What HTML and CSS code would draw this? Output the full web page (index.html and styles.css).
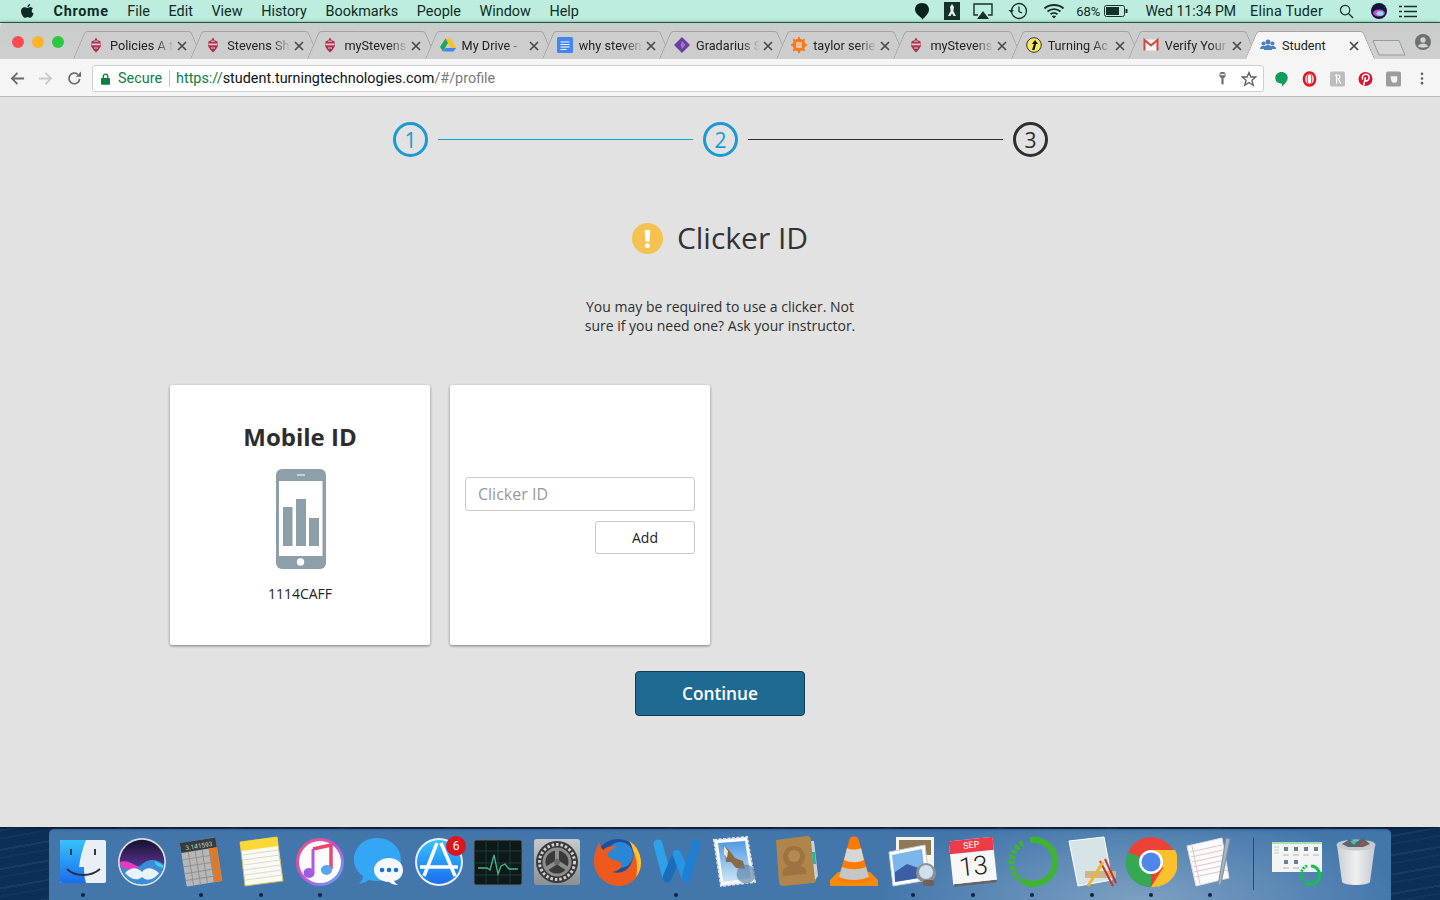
FILE: index.html
```html
<!DOCTYPE html>
<html lang="en">
<head>
<meta charset="utf-8">
<title>Student</title>
<link rel="stylesheet" href="styles.css">
</head>
<body>
<svg class="defs" width="0" height="0" aria-hidden="true">
  <defs>
    <symbol id="stevens" viewBox="0 0 16 16">
      <path d="M8 0.500 9.500 3 12.500 4.500 13 9 10.500 13 8 15.500 5.500 13 3 9 3.500 4.500 6.500 3Z" fill="#a8324f"/>
      <path d="M3.500 6.500H12.500V8.300H3.500Z" fill="#e9c3cc"/>
      <path d="M6 3.500H10V5H6Z" fill="#d98a9c"/>
      <path d="M6 10.500H10V11.500H6Z" fill="#e8c6ce"/>
    </symbol>
    <symbol id="close" viewBox="0 0 10 10">
      <path d="M1 1 9 9M9 1 1 9" stroke="#4a4a4a" stroke-width="1.700" fill="none"/>
    </symbol>
    <linearGradient id="siriG" x1="0" y1="0" x2="0" y2="1">
      <stop offset="0" stop-color="#12122e"/><stop offset=".45" stop-color="#4a2a78"/><stop offset="1" stop-color="#2b6fb8"/>
    </linearGradient>
    <linearGradient id="itunesG" x1="0" y1="0" x2="1" y2="1">
      <stop offset="0" stop-color="#f9506b"/><stop offset=".5" stop-color="#c950dd"/><stop offset="1" stop-color="#4fb6f0"/>
    </linearGradient>
    <linearGradient id="blueG" x1="0" y1="0" x2="0" y2="1">
      <stop offset="0" stop-color="#35c2fb"/><stop offset="1" stop-color="#1b6df0"/>
    </linearGradient>
    <linearGradient id="boxG" x1="0" y1="0" x2="0" y2="1">
      <stop offset="0" stop-color="#c6cacb"/><stop offset="1" stop-color="#8b9193"/>
    </linearGradient>
    <linearGradient id="skyG" x1="0" y1="0" x2="0" y2="1">
      <stop offset="0" stop-color="#4d9be4"/><stop offset="1" stop-color="#cfe5f5"/>
    </linearGradient>
    <linearGradient id="glassG" x1="0" y1="0" x2="1" y2="0">
      <stop offset="0" stop-color="#c9cfd3"/><stop offset=".5" stop-color="#eef0f1"/><stop offset="1" stop-color="#c4cace"/>
    </linearGradient>
    <clipPath id="siriClip"><circle cx="26" cy="26" r="22.300"/></clipPath>
  </defs>
</svg>

<header class="menubar">
  <div class="menu-left">
    <svg class="apple" viewBox="0 0 14 16"><path d="M10.200 1C10.300 2.500 9 4 7.400 3.900 7.300 2.500 8.700 1.100 10.200 1ZM7.400 4.900C8.100 4.900 9 4.100 10.300 4.100 11.400 4.200 12.400 4.700 13 5.600 11 6.900 11.400 9.700 13.600 10.600 13.100 12 11.700 14.800 10.200 14.800 9.300 14.800 8.800 14.200 7.700 14.200 6.600 14.200 6 14.800 5.200 14.800 3.400 14.800 1 11 1 8.200 1 5.500 2.800 4.200 4.400 4.200 5.600 4.200 6.600 4.900 7.400 4.900Z" fill="#0d2a24"/></svg>
    <span class="menu-strong">Chrome</span>
    <span>File</span><span>Edit</span><span>View</span><span>History</span><span>Bookmarks</span><span>People</span><span>Window</span><span>Help</span>
  </div>
  <div class="menu-right">
    <svg class="st st-bubble" viewBox="0 0 16 18"><path d="M8 1C12 1 15 3.800 15 7.500 15 11.500 11 15 8.300 17.500 7.800 15 1 12.500 1 7.500 1 3.800 4 1 8 1Z" fill="#08231d"/></svg>
    <svg class="st st-tower" viewBox="0 0 16 18"><rect width="16" height="18" fill="#15312b"/><path d="M8 2 10 5 9.300 9 12 14H9.500L8 11.500 6.500 14H4L6.700 9 6 5Z" fill="#dff3ec"/></svg>
    <svg class="st st-air" viewBox="0 0 20 17"><path d="M5 12H1V1H19V12H15" fill="none" stroke="#15312b" stroke-width="1.400"/><path d="M10 8 16 16H4Z" fill="#15312b"/></svg>
    <svg class="st st-time" viewBox="0 0 20 18"><circle cx="11" cy="9" r="7.500" fill="none" stroke="#15312b" stroke-width="1.300"/><path d="M11 4.500V9.500L14 11" fill="none" stroke="#15312b" stroke-width="1.300"/><path d="M0.500 8H6L3.200 11Z" fill="#15312b"/></svg>
    <svg class="st st-wifi" viewBox="0 0 22 16"><path d="M1.500 5.500C6.500 .8 15.500 .8 20.500 5.500M4.500 8.500C8 5.300 14 5.300 17.500 8.500M7.500 11.300C9.500 9.700 12.500 9.700 14.500 11.300" fill="none" stroke="#15312b" stroke-width="1.800"/><path d="M11 15.500 8.800 13.200C10 12.300 12 12.300 13.200 13.200Z" fill="#15312b"/></svg>
    <span class="st-pct">68%</span>
    <svg class="st st-batt" viewBox="0 0 24 12"><rect x=".5" y=".5" width="20" height="11" rx="2" fill="none" stroke="#15312b"/><rect x="2" y="2" width="13" height="8" fill="#15312b"/><rect x="21.500" y="4" width="2" height="4" fill="#15312b"/></svg>
    <span class="st-clock">Wed 11:34 PM</span>
    <span class="st-user">Elina Tuder</span>
    <svg class="st st-search" viewBox="0 0 16 16"><circle cx="6.500" cy="6.500" r="5" fill="none" stroke="#15312b" stroke-width="1.300"/><path d="M10 10 15 15" stroke="#15312b" stroke-width="1.500"/></svg>
    <svg class="st st-siri" viewBox="0 0 16 16"><circle cx="8" cy="8" r="8" fill="#12143a"/><ellipse cx="8" cy="10" rx="6" ry="3.500" fill="#c44fd0"/><ellipse cx="9" cy="10.500" rx="3.500" ry="2.200" fill="#8fdcf5"/></svg>
    <svg class="st st-list" viewBox="0 0 18 13"><path d="M5 1.500H18M5 6.500H18M5 11.500H18M0 1.500H3M0 6.500H3M0 11.500H3" stroke="#15312b" stroke-width="1.700"/></svg>
  </div>
</header>

<div class="window">
  <div class="tabstrip">
    <div class="lights"><i class="light red"></i><i class="light yellow"></i><i class="light green"></i></div>
    <div class="tabs">
      <div class="tab"><svg class="fav"><use href="#stevens"/></svg><span class="tab-title">Policies A t</span><svg class="x"><use href="#close"/></svg></div>
      <div class="tab"><svg class="fav"><use href="#stevens"/></svg><span class="tab-title">Stevens Sh</span><svg class="x"><use href="#close"/></svg></div>
      <div class="tab"><svg class="fav"><use href="#stevens"/></svg><span class="tab-title">myStevens</span><svg class="x"><use href="#close"/></svg></div>
      <div class="tab"><svg class="fav" viewBox="0 0 16 16"><path d="M5.500 1.500H10.500L16 11H11Z" fill="#f5c518"/><path d="M5.500 1.500 8 6 3 14.500 0 10Z" fill="#1fa463"/><path d="M5.500 11H16L13.500 14.500H3Z" fill="#4285f4"/></svg><span class="tab-title">My Drive - </span><svg class="x"><use href="#close"/></svg></div>
      <div class="tab"><svg class="fav" viewBox="0 0 16 16"><rect width="16" height="16" rx="1.500" fill="#4285f4"/><path d="M3.500 5H12.500M3.500 7.500H12.500M3.500 10H12.500M3.500 12.500H9.500" stroke="#fff" stroke-width="1.200"/></svg><span class="tab-title">why steven</span><svg class="x"><use href="#close"/></svg></div>
      <div class="tab"><svg class="fav" viewBox="0 0 16 16"><path d="M8 0 16 8 8 16 0 8Z" fill="#6b3fa0"/><path d="M8 4 11.500 8 8 12 6.500 8Z" fill="#9d78cc"/></svg><span class="tab-title">Gradarius S</span><svg class="x"><use href="#close"/></svg></div>
      <div class="tab"><svg class="fav" viewBox="0 0 16 16"><circle cx="8" cy="8" r="6.500" fill="#f47a1f"/><path d="M8 0V16M0 8H16M2.300 2.300 13.700 13.700M13.700 2.300 2.300 13.700" stroke="#f47a1f" stroke-width="2"/><path d="M5 6H11M5 8H11M5 10H11" stroke="#fff" stroke-width="1"/></svg><span class="tab-title">taylor serie</span><svg class="x"><use href="#close"/></svg></div>
      <div class="tab"><svg class="fav"><use href="#stevens"/></svg><span class="tab-title">myStevens</span><svg class="x"><use href="#close"/></svg></div>
      <div class="tab"><svg class="fav" viewBox="0 0 16 16"><circle cx="8" cy="8" r="7.300" fill="#f6ea5c" stroke="#333" stroke-width="1"/><path d="M9 3 12 7H10L8.500 13H6L8 7H6Z" fill="#111"/></svg><span class="tab-title">Turning Ac</span><svg class="x"><use href="#close"/></svg></div>
      <div class="tab"><svg class="fav" viewBox="0 0 16 16"><rect x="1" y="2.500" width="14" height="11" fill="#f4f4f4"/><path d="M1.500 13.500V3L8 8.500 14.500 3V13.500" fill="none" stroke="#d44638" stroke-width="2"/></svg><span class="tab-title">Verify Your</span><svg class="x"><use href="#close"/></svg></div>
      <div class="tab tab-active"><svg class="fav" viewBox="0 0 16 16"><circle cx="3.500" cy="6.500" r="2" fill="#4a7fc1"/><circle cx="12.500" cy="6.500" r="2" fill="#4a7fc1"/><circle cx="8" cy="5" r="2.500" fill="#4a7fc1"/><path d="M0 12C0 9.500 2 9 3.500 9S7 9.500 7 12ZM9 12C9 9.500 11 9 12.500 9S16 9.500 16 12Z" fill="#4a7fc1"/><path d="M4 13C4 9 6 8 8 8S12 9 12 13Z" fill="#4a7fc1"/></svg><span class="tab-title tab-title-full">Student</span><svg class="x"><use href="#close"/></svg></div>
      <svg class="newtab" viewBox="0 0 34 17"><path d="M1 1.500H27L33 16H7Z" fill="#d6d6d6" stroke="#9a9a9a"/></svg>
    </div>
    <svg class="profile" viewBox="0 0 16 16"><circle cx="8" cy="8" r="8" fill="#6f6f6f"/><circle cx="8" cy="6" r="2.700" fill="#d2d2d2"/><path d="M3 12.500C3.800 10 6 9.700 8 9.700S12.200 10 13 12.500C11 14 5 14 3 12.500Z" fill="#d2d2d2"/></svg>
  </div>

  <div class="toolbar">
    <svg class="nav" viewBox="0 0 16 16"><path d="M15 8H2M8 2 2 8 8 14" fill="none" stroke="#6a6a6a" stroke-width="1.900"/></svg>
    <svg class="nav" viewBox="0 0 16 16"><path d="M1 8H14M8 2 14 8 8 14" fill="none" stroke="#c9c9c9" stroke-width="1.900"/></svg>
    <svg class="nav" viewBox="0 0 16 16"><path d="M13.500 8.500A5.700 5.700 0 1 1 11.500 3.500" fill="none" stroke="#6a6a6a" stroke-width="1.800"/><path d="M9.500 6H15V.5Z" fill="#6a6a6a"/></svg>
    <div class="omnibox">
      <svg class="lock" viewBox="0 0 10 13"><path d="M2.500 6V3.500a2.500 2.500 0 0 1 5 0V6" fill="none" stroke="#0b8043" stroke-width="1.500"/><rect y="5.500" width="10" height="7.500" rx="1" fill="#0b8043"/></svg>
      <span class="secure">Secure</span>
      <span class="omni-sep"></span>
      <span class="url"><span class="url-scheme">https://</span><span class="url-host">student.turningtechnologies.com</span><span class="url-path">/#/profile</span></span>
      <span class="omni-spacer"></span>
      <svg class="omni-key" viewBox="0 0 10 14"><circle cx="5" cy="3" r="3.500" fill="#6e6e6e"/><rect x="3.800" y="4" width="2.400" height="9.500" fill="#6e6e6e"/><rect x="2.500" y="1.800" width="5" height="1.600" fill="#eee"/></svg>
      <svg class="omni-star" viewBox="0 0 16 16"><path d="M8 1.500 9.900 6H14.800L10.900 9.200 12.300 14.300 8 11.500 3.700 14.300 5.100 9.200 1.200 6H6.100Z" fill="none" stroke="#5f5f5f" stroke-width="1.300"/></svg>
    </div>
    <div class="ext">
      <svg class="ext-ic" viewBox="0 0 16 18"><path d="M8 1C12 1 15 3.800 15 7.500 15 11.500 11 15 8.500 17.500V14C4 14 1 11.500 1 7.500 1 3.800 4 1 8 1Z" fill="#0f9d58"/></svg>
      <svg class="ext-ic" viewBox="0 0 16 16"><ellipse cx="8" cy="8" rx="6" ry="7" fill="none" stroke="#e5141e" stroke-width="2.600"/><ellipse cx="8" cy="8" rx="2.500" ry="5.500" fill="#fff" stroke="#e5141e"/></svg>
      <svg class="ext-ic" viewBox="0 0 16 16"><rect width="16" height="16" rx="2" fill="#bdbdbd"/><path d="M5 4H9.500C11 4 11 7.500 9 7.500H7M7 3V13M9 8 11.500 13" fill="none" stroke="#fff" stroke-width="1.300"/></svg>
      <svg class="ext-ic" viewBox="0 0 16 16"><circle cx="8" cy="8" r="7.500" fill="#d7172f"/><path d="M6 15 8 6M5 8.500C3.500 5 6 3 8.500 3 11.500 3 12.500 5.500 11.500 8 10.500 10.500 8 10.500 7.300 9" fill="none" stroke="#fff" stroke-width="1.700"/></svg>
      <svg class="ext-ic" viewBox="0 0 16 16"><rect width="16" height="16" rx="2" fill="#9c9c9c"/><path d="M5 5H12V9C12 11.500 10 12.500 7.500 12 5.500 11 5 8 5 5Z" fill="#f3f3f3"/></svg>
      <svg class="ext-menu" viewBox="0 0 4 14"><circle cx="2" cy="2" r="1.400" fill="#5f5f5f"/><circle cx="2" cy="7" r="1.400" fill="#5f5f5f"/><circle cx="2" cy="12" r="1.400" fill="#5f5f5f"/></svg>
    </div>
  </div>

  <main class="page">
    <div class="stepper">
      <span class="step step-done">1</span><span class="step-line step-line-done"></span>
      <span class="step step-done">2</span><span class="step-line"></span>
      <span class="step">3</span>
    </div>
    <div class="title-row">
      <span class="warn">!</span>
      <h1 class="title">Clicker ID</h1>
    </div>
    <p class="lead">You may be required to use a clicker. Not<br>sure if you need one? Ask your instructor.</p>
    <div class="cards">
      <section class="card card-mobile">
        <h2 class="card-title">Mobile ID</h2>
        <svg class="phone" viewBox="0 0 50 100">
          <rect width="50" height="100" rx="6" fill="#8d9fa9"/>
          <rect x="3" y="12" width="43.500" height="75" fill="#fff"/>
          <rect x="21" y="5.500" width="8" height="1" fill="#fff"/>
          <circle cx="24.500" cy="93" r="3.700" fill="#fff"/>
          <rect x="7" y="38" width="9.500" height="39" fill="#8d9fa9"/>
          <rect x="20" y="30" width="10" height="47" fill="#8d9fa9"/>
          <rect x="33" y="49" width="10" height="28" fill="#8d9fa9"/>
        </svg>
        <p class="mobile-id">1114CAFF</p>
      </section>
      <section class="card card-clicker">
        <input class="clicker-input" type="text" placeholder="Clicker ID">
        <button class="add-btn" type="button">Add</button>
      </section>
    </div>
    <button class="continue" type="button">Continue</button>
  </main>
</div>

<footer class="desktop">
  <nav class="dock">
    <div class="dock-item on"><svg viewBox="0 0 52 52"><rect x="3" y="4" width="46" height="43" rx="2" fill="#e9eff5"/><path d="M5 4H29C25 14 23 23 22 31H27C27 37 27.500 42 29 47H5C4 47 3 46 3 45V6C3 5 4 4 5 4Z" fill="url(#blueG)"/><path d="M14 13V19M38 13V19" stroke="#2a3a4a" stroke-width="2"/><path d="M10 33C18 41 34 41 43 33" fill="none" stroke="#24303c" stroke-width="1.800"/></svg></div>
    <div class="dock-item"><svg viewBox="0 0 52 52"><circle cx="26" cy="26" r="24" fill="#d9dde0"/><circle cx="26" cy="26" r="22.300" fill="url(#siriG)"/><g clip-path="url(#siriClip)"><path d="M2 30C12 22 18 32 24 30 30 24 38 20 50 30V50H2Z" fill="#3b8ed6"/><path d="M2 27C10 23 16 27 23 32 14 36 8 34 2 27Z" fill="#e63bc0"/><path d="M38 25C42 26 46 28 49 32 44 32 40 30 38 25Z" fill="#3fd0e8"/><path d="M9 37C15 31 21 31 26 36 30 31 36 31 43 37 37 45 30 45 26 41 22 45 15 44 9 37Z" fill="#e8f3fb"/></g></svg></div>
    <div class="dock-item on"><svg viewBox="0 0 52 52"><g transform="rotate(-9 26 26)"><rect x="8" y="4" width="36" height="44" rx="1" fill="#b7b7b7"/><rect x="8" y="4" width="36" height="10" fill="#333d3e"/><text x="40" y="12" class="calc-read">3.141593</text><rect x="36" y="14" width="8" height="34" fill="#e8771b"/><path d="M8 21H44M8 28H44M8 35H44M8 42H44M15 14V48M22 14V48M29 14V48M36 14V48" stroke="#8f8f8f" stroke-width="1"/></g></svg></div>
    <div class="dock-item on"><svg viewBox="0 0 52 52"><path d="M5 6 42 1 48 45 10 50Z" fill="#fbfaf0" stroke="#cdb866"/><path d="M5 6 42 1 43.300 10 6.300 15Z" fill="#fdd835"/><path d="M7.500 19 44 14M8 24 44.700 19M8.700 29 45.400 24M9.400 34 46 29M10 39 46.800 34M10.700 44 47.400 39" stroke="#d8d8d8" stroke-width="1"/></svg></div>
    <div class="dock-item on"><svg viewBox="0 0 52 52"><circle cx="26" cy="26" r="24" fill="url(#itunesG)"/><circle cx="26" cy="26" r="21" fill="#fcfcfd"/><path d="M19 13 37 9V33" fill="none" stroke="#e9476f" stroke-width="3.500"/><ellipse cx="15" cy="37" rx="5.500" ry="5" fill="#9c5de0"/><path d="M19 13V37" stroke="#b35ae0" stroke-width="3"/><ellipse cx="32.500" cy="34" rx="5.500" ry="5" fill="#5aa6ee"/></svg></div>
    <div class="dock-item"><svg viewBox="0 0 52 52"><path d="M24 2C37 2 48 11 48 24 48 36 37 45 24 45 21 45 18 44.500 16 44 13 46 9 48 6 47.500 9 45 10 42 10 40 4 36 1 30 1 24 1 11 11 2 24 2Z" fill="#33a6f6"/><path d="M36 22C44 22 50 27 50 34 50 40 46 44 41 45 42 47 44 48 45 49 42 49 38 48 36 46 28 46 21 41 21 34 21 27 28 22 36 22Z" fill="#f4f8fb"/><circle cx="29" cy="34" r="2.300" fill="#1c6fd6"/><circle cx="36" cy="34" r="2.300" fill="#1c6fd6"/><circle cx="43" cy="34" r="2.300" fill="#1c6fd6"/></svg></div>
    <div class="dock-item"><svg viewBox="0 0 52 52"><circle cx="26" cy="26" r="24" fill="#e9eef5"/><circle cx="26" cy="26" r="22" fill="url(#blueG)"/><path d="M28 7 42 40M24 7 11 40M7 31H45" stroke="#fff" stroke-width="3.500" fill="none"/></svg><span class="badge">6</span></div>
    <div class="dock-item"><svg viewBox="0 0 52 52"><rect x="2" y="4" width="48" height="45" rx="2" fill="#0e1a1a" stroke="#646d6d"/><path d="M2 15H50M2 27H50M2 39H50M14 4V49M26 4V49M38 4V49" stroke="#1f3b38" stroke-width="1"/><path d="M6 32H15L18 34 22 19 26 38 29 30 33 28 37 33H46" fill="none" stroke="#49b58a" stroke-width="1.300"/></svg></div>
    <div class="dock-item"><svg viewBox="0 0 52 52"><rect x="3" y="3" width="46" height="46" rx="3" fill="url(#boxG)"/><circle cx="26" cy="26" r="21" fill="#3a3a3a"/><circle cx="26" cy="26" r="17.500" fill="none" stroke="#d0d0d0" stroke-width="3" stroke-dasharray="2.500 2"/><circle cx="26" cy="26" r="13" fill="none" stroke="#8d8d8d" stroke-width="3"/><path d="M26 26V13M26 26 15 33M26 26 37 33" stroke="#8d8d8d" stroke-width="4"/><circle cx="26" cy="26" r="3" fill="#6a6a6a"/></svg></div>
    <div class="dock-item"><svg viewBox="0 0 52 52"><circle cx="27" cy="26" r="23" fill="#1d4f9c"/><circle cx="29" cy="19" r="13" fill="#2a86d6"/><path d="M8 6C6 12 2 20 3 28 5 42 17 50 28 50 40 50 50 40 50 27 50 17 45 9 38 5 43 12 44 20 40 28 36 36 28 38 21 36 28 35 32 31 30 27 27 24 19 24 17 20 16 16 21 13 26 11 20 9 15 11 12 14 10 12 9 9 8 6Z" fill="#ee5a1e"/><path d="M38 5C45 9 50 17 50 27 50 32 48 37 45 41 47 32 46 22 42 14 41 10 40 7 38 5Z" fill="#ffc531"/></svg></div>
    <div class="dock-item on"><svg viewBox="0 0 52 52"><path d="M8 8 17 42" stroke="#2fa0ea" stroke-width="9" stroke-linecap="round"/><path d="M17 42 27 18" stroke="#1a6dbb" stroke-width="9" stroke-linecap="round"/><path d="M27 18 36 42" stroke="#2796e2" stroke-width="9" stroke-linecap="round"/><path d="M36 42 46 8" stroke="#1f7fd2" stroke-width="9" stroke-linecap="round"/></svg></div>
    <div class="dock-item"><svg viewBox="0 0 52 52"><path d="M5 4 38 1 46 46 12 50Z" fill="#fff" stroke="#dfe5ea" stroke-width="2" stroke-dasharray="3 1.500"/><path d="M9 7 36 5 42 42 14 46Z" fill="url(#skyG)"/><path d="M14 9 20 14 26 22 34 25 36 33 27 32 22 26 17 26 16 16Z" fill="#8a6a44"/><path d="M15 10 19 15 18 22 15 18Z" fill="#e9e2d5"/><circle cx="37" cy="38" r="9.500" fill="#5a7fa4" opacity=".65"/></svg></div>
    <div class="dock-item"><svg viewBox="0 0 52 52"><path d="M7 4 38 0C41 0 42 2 42 4L47 44C47 46 46 47 44 47L14 50C11 50 10 48 10 46Z" fill="#b0854c"/><path d="M42 5 45 5 49 40 46 44Z" fill="#c9d2d6"/><path d="M43 16 46 16 47 28 44 28Z" fill="#27b0a0"/><circle cx="25" cy="21" r="11" fill="#9e7340"/><path d="M13 36C16 28 34 27 37 34L37 38 14 40Z" fill="#9e7340"/><circle cx="25" cy="20" r="6" fill="#b38a54"/></svg></div>
    <div class="dock-item"><svg viewBox="0 0 52 52"><path d="M2 44 10 36 42 36 50 44 50 50 2 50Z" fill="#f58a0b"/><path d="M22 2C24 0 28 0 30 2L42 44C34 48 18 48 10 44Z" fill="#ff7b00"/><path d="M19 12C23 14 29 14 33 12L36 24C30 27 22 27 16 24Z" fill="#d6d6d6"/><path d="M14 31C22 34 30 34 38 31L41 41C32 45 20 45 11 41Z" fill="#c6c6c6"/></svg></div>
    <div class="dock-item on"><svg viewBox="0 0 52 52"><rect x="9" y="1" width="38" height="35" fill="#f6f3ea"/><rect x="12" y="4" width="32" height="15" fill="#8c7a56"/><path d="M2 16 38 9 42 44 6 50Z" fill="#fff" stroke="#ccc"/><path d="M5 19 35 13 38 41 8 46Z" fill="#7cb6ea"/><path d="M8 36 20 28 37 34 38 41 8 46Z" fill="#3b5fa5"/><circle cx="39" cy="37" r="10" fill="#8d9196"/><circle cx="39" cy="36" r="7" fill="#cfe0ee"/><rect x="36" y="44" width="11" height="6" rx="2" fill="#6d6455"/></svg></div>
    <div class="dock-item on"><div class="cal"><span class="cal-m">SEP</span><span class="cal-d">13</span></div></div>
    <div class="dock-item on"><svg viewBox="0 0 52 52"><path d="M24 4A22 22 0 1 1 15 44" fill="none" stroke="#3fb52f" stroke-width="6"/><path d="M17 7A22 22 0 0 0 13 43" fill="none" stroke="#3fb52f" stroke-width="6" stroke-dasharray="3.500 2"/></svg></div>
    <div class="dock-item on"><svg viewBox="0 0 52 52"><path d="M3 5 38 1 46 44 12 50Z" fill="#d6e3e7" stroke="#fff"/><rect x="19" y="35" width="31" height="7" fill="#cfb489"/><path d="M34 25 47 50M39 23 50 47" stroke="#c0392b" stroke-width="2"/><path d="M37 26 22 50" stroke="#eeb52e" stroke-width="3"/></svg></div>
    <div class="dock-item on"><svg viewBox="0 0 52 52"><circle cx="26" cy="26" r="25" fill="#ea4335"/><path d="M26 26 4 39A25 25 0 0 0 26 51Z" fill="#34a853"/><path d="M4 39A25 25 0 0 1 3 16L26 26 15 48Z" fill="#34a853"/><path d="M26 14H50A25 25 0 0 1 26 51L38 32Z" fill="#fbc02d"/><circle cx="26" cy="26" r="12" fill="#fff"/><circle cx="26" cy="26" r="9.500" fill="#4e86ea"/></svg></div>
    <div class="dock-item on"><svg viewBox="0 0 52 52"><path d="M3 10 38 2 45 42 12 50Z" fill="#fbfbfb" stroke="#ddd"/><path d="M6 16 38 9M7 21 39 14M8 26 40 19M9 31 41 24M10 36 42 29M11 41 43 34M8 10 16 48" stroke="#e3c5c5" stroke-width="1"/><path d="M42 2 46 3 37 48 34 50Z" fill="#a3b6c4" stroke="#7c8e9b"/></svg></div>
    <span class="dock-sep"></span>
    <div class="dock-item"><svg viewBox="0 0 52 52"><rect x="1" y="6" width="50" height="30" fill="#f2f5f4"/><rect x="1" y="6" width="50" height="2" fill="#a8dfb4"/><path d="M3 11H8M3 14H8M3 17H8" stroke="#c9c9c9"/><path d="M13 13H17M23 13H27M33 13H37M43 13H47M13 26H17M23 26H27" stroke="#6d7f95" stroke-width="4"/><path d="M12 19H18M22 19H28M32 19H38M42 19H48M12 32H18M22 32H28" stroke="#b4b4b4"/><path d="M40 30A9 9 0 1 1 34 46" fill="none" stroke="#11c24b" stroke-width="3"/><path d="M36 30A9 9 0 0 0 33 45" fill="none" stroke="#11c24b" stroke-width="3" stroke-dasharray="2 1"/></svg></div>
    <div class="dock-item"><svg viewBox="0 0 52 52"><path d="M7 9H45L40 46C38 50 14 50 12 46Z" fill="url(#glassG)"/><ellipse cx="26" cy="9" rx="19.500" ry="5.500" fill="#c5cace"/><path d="M12 8 20 3 26 6 33 2 40 8 33 11H18Z" fill="#5e6468"/><path d="M20 5 24 9 28 4Z" fill="#2fc6c0"/><path d="M33 5 36 9 30 9Z" fill="#c04050"/></svg></div>
  </nav>
</footer>
</body>
</html>
```

FILE: styles.css
```css
* { box-sizing: border-box; }
html, body { margin: 0; height: 900px; overflow: hidden; }
body {
  width: 1440px;
  font-family: "Open Sans", "Liberation Sans", sans-serif;
  background:
    repeating-linear-gradient(170deg, rgba(120, 165, 205, .1) 0 2px, transparent 2px 8px, rgba(120, 165, 205, .05) 8px 10px, transparent 10px 19px),
    #0c2f58;
  display: flex;
  flex-direction: column;
}
.defs { position: absolute; }

/* menu bar */
.menubar {
  height: 22px;
  flex: none;
  background: #bcedde;
  display: flex;
  justify-content: space-between;
  align-items: center;
  font-family: Roboto, "Liberation Sans", sans-serif;
  font-size: 14.400px;
  color: #0f2c26;
  padding: 0 23px 0 20px;
}
.menu-left { display: flex; align-items: center; gap: 18.600px; }
.apple { width: 14px; height: 16px; margin-right: 1px; }
.menu-strong { font-weight: 700; letter-spacing: .7px; }
.menu-right { display: flex; align-items: center; }
.st { flex: none; display: block; }
.st-bubble { width: 16px; height: 18px; }
.st-tower { width: 16px; height: 18px; margin-left: 14px; }
.st-air { width: 20px; height: 17px; margin-left: 13px; }
.st-time { width: 20px; height: 18px; margin-left: 15px; }
.st-wifi { width: 22px; height: 16px; margin-left: 15px; }
.st-pct { margin-left: 11px; font-size: 13px; }
.st-batt { width: 24px; height: 12px; margin-left: 4px; }
.st-clock { margin-left: 17px; font-size: 14.050px; }
.st-user { margin-left: 14px; letter-spacing: .2px; }
.st-search { width: 15px; height: 15px; margin-left: 16px; }
.st-siri { width: 16px; height: 16px; margin-left: 17px; }
.st-list { width: 18px; height: 13px; margin-left: 12px; }

/* window */
.window {
  height: 805px;
  flex: none;
  display: flex;
  flex-direction: column;
  border-top: 1px solid #155a49;
  box-shadow: 0 1px 4px rgba(0, 0, 0, .55);
  background: #e2e2e2;
  position: relative;
  z-index: 1;
}
.tabstrip {
  height: 36px;
  flex: none;
  background: linear-gradient(#c9cdcb, #cfcfcf);
  display: flex;
  align-items: flex-end;
  position: relative;
  padding-left: 12px;
  border-radius: 4px 0 0 0;
}
.lights { display: flex; gap: 8px; align-self: flex-start; margin-top: 13px; }
.light { width: 12px; height: 12px; border-radius: 50%; display: block; }
.red { background: #fc4a50; }
.yellow { background: #fdb42a; }
.green { background: #2bc840; }
.tabs { display: flex; align-items: flex-end; margin-left: 9px; }
.tab {
  width: 130px;
  height: 28px;
  margin-right: -12.800px;
  position: relative;
  flex: none;
  font-family: Roboto, "Liberation Sans", sans-serif;
  font-size: 12.700px;
  color: #222;
  padding-left: 15px;
  display: flex;
  align-items: center;
}
.tab::before, .tab::after {
  content: "";
  position: absolute;
  top: 0;
  bottom: 0;
  width: 50%;
  background: #cdcdcd;
  border-top: 1px solid #a2a2a2;
  z-index: 0;
}
.tab::before {
  left: 0;
  border-left: 1px solid #9d9d9d;
  border-radius: 3px 0 0 0;
  transform-origin: bottom left;
  transform: skewX(-23deg);
}
.tab::after {
  right: 0;
  border-right: 1px solid #9d9d9d;
  border-radius: 0 3px 0 0;
  transform-origin: bottom right;
  transform: skewX(23deg);
}
.tab-active { z-index: 2; }
.tab-active::before, .tab-active::after { background: #f5f5f5; }
.fav { width: 16px; height: 16px; flex: none; position: relative; z-index: 1; }
.tab-title {
  position: relative;
  z-index: 1;
  margin-left: 6px;
  width: 64px;
  white-space: nowrap;
  overflow: hidden;
  -webkit-mask-image: linear-gradient(90deg, #000 70%, transparent 100%);
  mask-image: linear-gradient(90deg, #000 70%, transparent 100%);
}
.tab-title-full { -webkit-mask-image: none; mask-image: none; }
.x { width: 10px; height: 10px; flex: none; position: absolute; left: 104px; top: 10px; z-index: 1; }
.newtab { width: 34px; height: 17px; flex: none; margin-left: 10px; margin-bottom: 3px; }
.profile { width: 16px; height: 16px; position: absolute; left: 1415px; top: 11px; }

.toolbar {
  height: 38px;
  flex: none;
  background: #f5f5f5;
  border-bottom: 1px solid #b9b9b9;
  display: flex;
  align-items: center;
  padding: 2px 0 0 10px;
}
.nav { width: 15px; height: 15px; flex: none; margin-right: 13px; }
.nav:nth-child(2) { margin-right: 14px; }
.nav:nth-child(3) { margin-right: 10px; }
.omnibox {
  width: 1172px;
  height: 27px;
  flex: none;
  background: #fff;
  border: 1px solid #cfcfcf;
  border-radius: 3px;
  display: flex;
  align-items: center;
  padding: 0 8px;
  font-family: Roboto, "Liberation Sans", sans-serif;
  font-size: 14.400px;
}
.lock { width: 9px; height: 12px; flex: none; }
.secure { color: #0b8043; margin-left: 8px; }
.omni-sep { width: 1px; height: 17px; background: #c4c4c4; margin: 0 6px 0 7px; }
.url-scheme { color: #0b8043; }
.url-host { color: #111; }
.url-path { color: #7a7a7a; }
.omni-spacer { flex: 1; }
.omni-key { width: 9px; height: 13px; margin-right: 14px; }
.omni-star { width: 16px; height: 16px; margin-right: -2px; }
.ext { display: flex; align-items: center; margin-left: 10px; }
.ext-ic { width: 15px; height: 16px; margin-right: 13px; }
.ext-menu { width: 4px; height: 13px; margin-left: 6px; }

/* page */
.page {
  flex: 1;
  background: #e2e2e2;
  display: flex;
  flex-direction: column;
  align-items: center;
  padding-top: 25px;
  color: #2f2f2f;
}
.stepper { display: flex; align-items: center; margin-left: 1px; }
.step {
  width: 35px;
  height: 35px;
  border: 3px solid #2f2f2f;
  border-radius: 50%;
  display: flex;
  align-items: center;
  justify-content: center;
  font-size: 21px;
  color: #2f2f2f;
}
.step-done { border-color: #189ad6; color: #189ad6; }
.step-line { width: 255px; height: 1px; margin: 0 10px; background: #2f2f2f; }
.step-line-done { background: #189ad6; }
.title-row { display: flex; align-items: center; margin-top: 61px; height: 40px; }
.warn {
  width: 31px;
  height: 31px;
  border-radius: 50%;
  background: #f3c24f;
  color: #fff;
  font-weight: 800;
  font-size: 24px;
  line-height: 31px;
  text-align: center;
  margin-right: 14px;
}
.title { margin: 0; font-size: 30px; font-weight: 400; line-height: 40px; color: #333; }
.lead { margin: 39px 0 0; font-size: 14px; line-height: 19px; text-align: center; color: #2f2f2f; }
.cards { width: 1100px; display: flex; gap: 20px; margin-top: 50px; }
.card {
  width: 260px;
  height: 260px;
  background: #fff;
  border-radius: 2px;
  box-shadow: 0 1px 3px rgba(0, 0, 0, .45);
}
.card-mobile { display: flex; flex-direction: column; align-items: center; padding-top: 35px; }
.card-title { margin: 0; font-size: 24px; line-height: 33px; font-weight: 700; color: #2d2d2d; }
.phone { width: 50px; height: 100px; margin: 16px 0 0 1px; }
.mobile-id { margin: 15px 0 0; font-size: 14px; line-height: 19px; color: #222; }
.card-clicker { display: flex; flex-direction: column; align-items: flex-end; padding: 92px 15px 0; }
.clicker-input {
  width: 230px;
  height: 34px;
  border: 1px solid #c8c8c8;
  border-radius: 3px;
  padding: 0 12px;
  font: 16px "Open Sans", sans-serif;
  background: #fff;
  outline: none;
}
.clicker-input::placeholder { color: #999; opacity: 1; }
.add-btn {
  width: 100px;
  height: 33px;
  margin-top: 10px;
  background: #fff;
  border: 1px solid #c8c8c8;
  border-radius: 3px;
  font: 14px "Open Sans", sans-serif;
  color: #222;
}
.continue {
  width: 170px;
  height: 45px;
  margin-top: 26px;
  background: #1f6a92;
  color: #fff;
  border: 1px solid #123a50;
  border-radius: 4px;
  font: 600 17.300px "Open Sans", sans-serif;
}

/* dock */
.desktop { flex: 1; display: flex; justify-content: center; padding-top: 2px; }
.dock {
  width: 1342px;
  height: 71px;
  background: radial-gradient(ellipse 260px 90px at 1090px 72px, #7da0c2 0, #4377ab 100%), #4074a8;
  border-radius: 5px 5px 0 0;
  display: flex;
  align-items: flex-start;
  padding-left: 4px;
}
.dock-item {
  width: 59.350px;
  height: 71px;
  flex: none;
  position: relative;
  display: flex;
  justify-content: center;
  padding-top: 7px;
}
.dock-item svg { width: 52px; height: 52px; display: block; }
.dock-item.on::after {
  content: "";
  position: absolute;
  left: 50%;
  bottom: 3px;
  width: 4px;
  height: 4px;
  margin-left: -2px;
  border-radius: 50%;
  background: #0b2342;
}
.dock-sep { width: 1px; height: 52px; background: #1f4c78; margin: 9px 13px 0; flex: none; }
.badge {
  position: absolute;
  left: 37px;
  top: 7px;
  width: 20px;
  height: 20px;
  border-radius: 50%;
  background: #e0141c;
  color: #fff;
  font-size: 12px;
  font-family: Roboto, sans-serif;
  line-height: 20px;
  text-align: center;
}
.calc-read { font: 6.500px Roboto, sans-serif; fill: #c9d0d0; text-anchor: end; }
.cal {
  width: 44px;
  height: 46px;
  margin-top: 3px;
  background: #f7f7f7;
  border-bottom: 3px solid #666;
  border-radius: 2px;
  transform: rotate(-6deg);
  display: flex;
  flex-direction: column;
  align-items: center;
  font-family: Roboto, sans-serif;
}
.cal-m { width: 100%; height: 13px; background: #ef3a4a; color: #fff; font-size: 9px; line-height: 13px; text-align: center; }
.cal-d { font-size: 26px; line-height: 29px; font-weight: 300; color: #222; }
```
